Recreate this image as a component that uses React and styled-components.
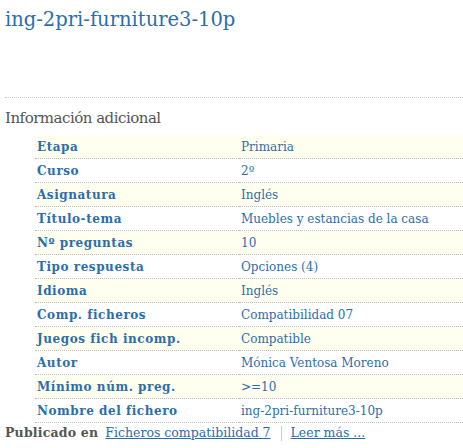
import React from "react";
import styled, { createGlobalStyle } from "styled-components";

const Global = createGlobalStyle`
  html, body { margin: 0; padding: 0; background: #fff; }
  body { font-family: "DejaVu Serif", Georgia, serif; }
`;

const Page = styled.div`
  width: 463px;
  padding: 0 0 0 5px;
  box-sizing: border-box;
`;

const Title = styled.h1`
  margin: 0;
  padding-top: 5px;
  font-family: "DejaVu Serif", Georgia, serif;
  font-size: 19.5px;
  font-weight: normal;
  color: #2a6eae;
  line-height: 30px;
  box-sizing: border-box;
  height: 97px;
`;

const Sep = styled.div`
  border-top: 1px dotted #c8c8c8;
`;

const SectionTitle = styled.h3`
  margin: 0;
  padding-top: 9px;
  font-size: 15px;
  font-weight: normal;
  color: #555;
  line-height: 22px;
  letter-spacing: -0.5px;
  height: 37px;
  box-sizing: border-box;
`;

const Table = styled.div`
  margin-left: 30px;
  display: grid;
  grid-template-columns: 204px 1fr;
`;

const Row = styled.div`
  display: contents;
  & > div {
    background: ${(p) => (p.$odd ? "#fffff0" : "#fff")};
  }
`;

const Cell = styled.div`
  height: 23px;
  line-height: 24px;
  border-bottom: 1px dotted #bdbdbd;
  font-size: 12px;
  color: #2a6eae;
  padding-left: 2px;
  white-space: nowrap;
`;

const Label = styled(Cell)`
  font-weight: bold;
  letter-spacing: 0.55px;
`;

const Footer = styled.div`
  display: flex;
  align-items: center;
  font-size: 12.5px;
  line-height: 20px;
  color: #555;
`;

const Strong = styled.span`
  font-weight: bold;
  letter-spacing: 0.2px;
  margin-right: 7px;
`;

const Link = styled.a`
  color: #2a6eae;
  text-decoration: underline;
`;

const Divider = styled.span`
  display: inline-block;
  width: 1px;
  height: 15px;
  background: #ccc;
  margin: 0 9px 0 10px;
`;

const rows = [
  ["Etapa", "Primaria"],
  ["Curso", "2º"],
  ["Asignatura", "Inglés"],
  ["Título-tema", "Muebles y estancias de la casa"],
  ["Nº preguntas", "10"],
  ["Tipo respuesta", "Opciones (4)"],
  ["Idioma", "Inglés"],
  ["Comp. ficheros", "Compatibilidad 07"],
  ["Juegos fich incomp.", "Compatible"],
  ["Autor", "Mónica Ventosa Moreno"],
  ["Mínimo núm. preg.", ">=10"],
  ["Nombre del fichero", "ing-2pri-furniture3-10p"],
];

export default function App() {
  return (
    <Page>
      <Global />
      <Title>ing-2pri-furniture3-10p</Title>
      <Sep />
      <SectionTitle>Información adicional</SectionTitle>
      <Table>
        {rows.map(([k, v], i) => (
          <Row key={k} $odd={i % 2 === 0}>
            <Label>{k}</Label>
            <Cell>{v}</Cell>
          </Row>
        ))}
      </Table>
      <Footer>
        <Strong>Publicado en</Strong>
        <Link href="#">Ficheros compatibilidad 7</Link>
        <Divider />
        <Link href="#">Leer más ...</Link>
      </Footer>
    </Page>
  );
}
